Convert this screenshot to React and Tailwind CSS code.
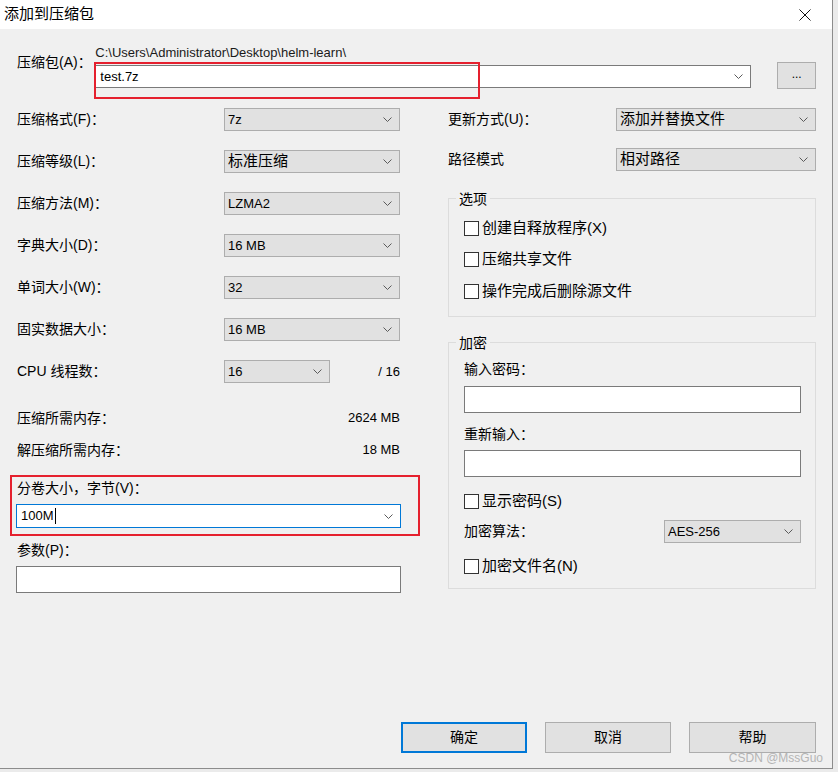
import React from 'react';

const Chevron = () => (
  <svg width="9" height="5" viewBox="0 0 9 5" className="shrink-0">
    <path d="M0.5 0.5L4.5 4.5L8.5 0.5" fill="none" stroke="#5a5a5a" strokeWidth="1" />
  </svg>
);

const Select = ({ value, w, cjk }) => (
  <div className={`flex items-center justify-between h-[23px] bg-[#e1e1e1] border border-[#adadad] pl-[3px] pr-[7px] ${w}`}>
    <span className={cjk ? 'text-[15px]' : 'text-[13px]'}>{value}</span>
    <Chevron />
  </div>
);

const Checkbox = ({ label }) => (
  <div className="flex items-center h-[20px]">
    <div className="w-[15px] h-[15px] border border-[#333333] bg-white shrink-0" />
    <span className="ml-[3px] text-[15px] leading-[20px]">{label}</span>
  </div>
);

const Row = ({ label, children, lw }) => (
  <div className="flex items-center h-[23px]">
    <div className={`${lw} text-[14px] shrink-0`}>{label}</div>
    {children}
  </div>
);

const Group = ({ title, h, children }) => (
  <div className={`relative border border-[#dcdcdc] pl-[15px] ${h}`}>
    <div className="absolute -top-[10px] left-[7px] px-[3px] bg-[#f0f0f0] text-[14px] leading-[20px]">{title}</div>
    {children}
  </div>
);

export default function App() {
  return (
    <div className="w-full h-[772px] bg-[#ebebeb] text-black [font-family:'Liberation_Sans','Noto_Sans_CJK_SC',sans-serif]">
      <div className="w-[833px] h-[769px] border-r border-b border-[#8c8c8c] bg-[#f0f0f0] flex flex-col">
        {/* title bar */}
        <div className="h-[29px] bg-white flex items-center justify-between pl-[4px] pr-[21px] shrink-0">
          <span className="text-[15px]">添加到压缩包</span>
          <svg width="12" height="12" viewBox="0 0 12 12">
            <path d="M0.5 0.5L11.5 11.5M11.5 0.5L0.5 11.5" stroke="#111" strokeWidth="1" />
          </svg>
        </div>

        <div className="relative flex-1 flex flex-col pl-[17px] pr-[16px]">
          {/* archive path */}
          <div className="mt-[15px] flex">
            <div className="w-[79px] pt-[8px] text-[14px] leading-[20px]">压缩包(A)：</div>
            <div className="flex flex-col">
              <div className="h-[18px] leading-[18px] text-[13px] text-[#1a1a1a]">C:\Users\Administrator\Desktop\helm-learn\</div>
              <div className="relative mt-[3px] w-[656px] h-[23px] bg-white border border-[#7a7a7a] flex items-center justify-between pl-[4px] pr-[7px]">
                <span className="text-[13px]">test.7z</span>
                <Chevron />
                <div className="absolute -left-[2px] -top-[4px] w-[386px] h-[37px] border-2 border-[#e5202e]" />
              </div>
            </div>
            <div className="ml-[26px] mt-[18px] w-[39px] h-[27px] bg-[#e1e1e1] border border-[#adadad] flex items-center justify-center text-[12px] pb-[4px]">...</div>
          </div>

          <div className="mt-[19px] flex">
            {/* left column */}
            <div className="w-[383px] flex flex-col">
              <div className="flex flex-col gap-[19px]">
                <Row label="压缩格式(F)：" lw="w-[207px]"><Select value="7z" w="w-[176px]" /></Row>
                <Row label="压缩等级(L)：" lw="w-[207px]"><Select value="标准压缩" w="w-[176px]" cjk /></Row>
                <Row label="压缩方法(M)：" lw="w-[207px]"><Select value="LZMA2" w="w-[176px]" /></Row>
                <Row label="字典大小(D)：" lw="w-[207px]"><Select value="16 MB" w="w-[176px]" /></Row>
                <Row label="单词大小(W)：" lw="w-[207px]"><Select value="32" w="w-[176px]" /></Row>
                <Row label="固实数据大小：" lw="w-[207px]"><Select value="16 MB" w="w-[176px]" /></Row>
                <Row label="CPU 线程数：" lw="w-[207px]">
                  <Select value="16" w="w-[106px]" />
                  <div className="flex-1 text-right text-[13px]">/ 16</div>
                </Row>
              </div>

              <div className="mt-[25px] h-[20px] flex items-center justify-between">
                <span className="text-[14px]">压缩所需内存：</span>
                <span className="text-[13px]">2624 MB</span>
              </div>
              <div className="mt-[12px] h-[20px] flex items-center justify-between">
                <span className="text-[14px]">解压缩所需内存：</span>
                <span className="text-[13px]">18 MB</span>
              </div>

              <div className="relative mt-[18px]">
                <div className="h-[20px] leading-[20px] text-[14px]">分卷大小，字节(V)：</div>
                <div className="mt-[6px] -ml-px w-[385px] h-[24px] bg-white border border-[#0078d7] flex items-center justify-between pl-[4px] pr-[7px]">
                  <span className="flex items-center text-[13px]">100M<span className="ml-px w-px h-[16px] bg-black" /></span>
                  <Chevron />
                </div>
                <div className="absolute -left-[7px] -top-[3px] w-[410px] h-[61px] border-2 border-[#e5202e]" />
              </div>

              <div className="mt-[12px] h-[20px] leading-[20px] text-[14px]">参数(P)：</div>
              <div className="mt-[6px] -ml-px w-[385px] h-[27px] bg-white border border-[#7a7a7a]" />
            </div>

            {/* right column */}
            <div className="ml-[48px] w-[368px] flex flex-col">
              <Row label="更新方式(U)：" lw="w-[168px]"><Select value="添加并替换文件" w="w-[200px]" cjk /></Row>
              <div className="mt-[17px]">
                <Row label="路径模式" lw="w-[168px]"><Select value="相对路径" w="w-[200px]" cjk /></Row>
              </div>

              <div className="mt-[27px]">
                <Group title="选项" h="h-[119px]">
                  <div className="pt-[19px] flex flex-col">
                    <Checkbox label="创建自释放程序(X)" />
                    <div className="mt-[11px]"><Checkbox label="压缩共享文件" /></div>
                    <div className="mt-[12px]"><Checkbox label="操作完成后删除源文件" /></div>
                  </div>
                </Group>
              </div>

              <div className="mt-[25px]">
                <Group title="加密" h="h-[247px]">
                  <div className="pt-[16px] flex flex-col">
                    <div className="h-[20px] leading-[20px] text-[14px]">输入密码：</div>
                    <div className="mt-[7px] w-[337px] h-[27px] bg-white border border-[#7a7a7a]" />
                    <div className="mt-[11px] h-[20px] leading-[20px] text-[14px]">重新输入：</div>
                    <div className="mt-[6px] w-[337px] h-[27px] bg-white border border-[#7a7a7a]" />
                    <div className="mt-[14px]"><Checkbox label="显示密码(S)" /></div>
                    <div className="mt-[9px] flex items-center h-[23px] w-[337px]">
                      <div className="w-[200px] text-[14px]">加密算法：</div>
                      <Select value="AES-256" w="w-[137px]" />
                    </div>
                    <div className="mt-[13px]"><Checkbox label="加密文件名(N)" /></div>
                  </div>
                </Group>
              </div>
            </div>
          </div>

          {/* buttons */}
          <div className="mt-auto mb-[15px] flex justify-end gap-[18px]">
            <div className="w-[126px] h-[31px] bg-[#e1e1e1] border-2 border-[#0078d7] flex items-center justify-center text-[14px]">确定</div>
            <div className="w-[126px] h-[31px] bg-[#e1e1e1] border border-[#adadad] flex items-center justify-center text-[14px]">取消</div>
            <div className="w-[127px] h-[31px] bg-[#e1e1e1] border border-[#adadad] flex items-center justify-center text-[14px]">帮助</div>
          </div>

          <div className="absolute right-[9px] bottom-[3px] text-[12px] leading-[14px] text-[#b4b4b4]">CSDN @MssGuo</div>
        </div>
      </div>
    </div>
  );
}
